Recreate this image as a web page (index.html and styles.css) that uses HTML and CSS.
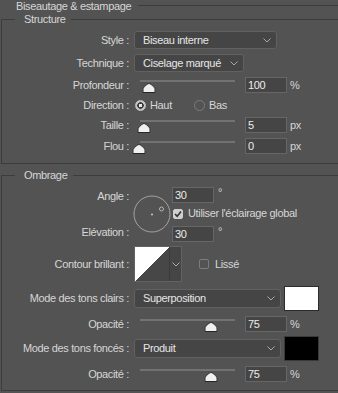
FILE: index.html
```html
<!DOCTYPE html>
<html lang="fr">
<head>
    <meta charset="UTF-8">
    <meta name="viewport" content="width=device-width, initial-scale=1.0">
    <title>Biseautage &amp; estampage</title>
    <link rel="stylesheet" href="styles.css">
</head>
<body>

  <div class="title-row">
    <span class="title">Biseautage &amp; estampage</span>
    <span class="rule"></span>
  </div>

  <!-- Structure -->
  <section class="group">
    <div class="group-head">
      <span class="corner"></span>
      <span class="group-name">Structure</span>
      <span class="rule"></span>
    </div>
    <div class="group-body structure">

      <div class="row">
        <span class="lbl">Style :</span>
        <div class="select w-style"><span>Biseau interne</span><svg class="chev" width="8" height="5" viewBox="0 0 8 5"><path d="M0.5 0.5 L4 4 L7.5 0.5"/></svg></div>
      </div>

      <div class="row">
        <span class="lbl">Technique :</span>
        <div class="select w-tech"><span>Ciselage marqué</span><svg class="chev" width="8" height="5" viewBox="0 0 8 5"><path d="M0.5 0.5 L4 4 L7.5 0.5"/></svg></div>
      </div>

      <div class="row slide-row">
        <span class="lbl">Profondeur :</span>
        <div class="slider"><span class="track"></span><svg class="thumb" style="left:10%" width="13" height="10" viewBox="0 0 13 10"><path d="M6.5 0.5 C8 0.5 12.5 4.5 12.5 6 V9.5 H0.5 V6 C0.5 4.5 5 0.5 6.5 0.5 Z"/></svg></div>
        <input class="num" type="text" value="100">
        <span class="unit">%</span>
      </div>

      <div class="row dir-row">
        <span class="lbl">Direction :</span>
        <div class="radios">
          <span class="radio-opt"><span class="radio on"></span>Haut</span>
          <span class="radio-opt"><span class="radio"></span>Bas</span>
        </div>
      </div>

      <div class="row slide-row">
        <span class="lbl">Taille :</span>
        <div class="slider"><span class="track"></span><svg class="thumb" style="left:5%" width="13" height="10" viewBox="0 0 13 10"><path d="M6.5 0.5 C8 0.5 12.5 4.5 12.5 6 V9.5 H0.5 V6 C0.5 4.5 5 0.5 6.5 0.5 Z"/></svg></div>
        <input class="num" type="text" value="5">
        <span class="unit">px</span>
      </div>

      <div class="row slide-row">
        <span class="lbl">Flou :</span>
        <div class="slider"><span class="track"></span><svg class="thumb" style="left:0%" width="13" height="10" viewBox="0 0 13 10"><path d="M6.5 0.5 C8 0.5 12.5 4.5 12.5 6 V9.5 H0.5 V6 C0.5 4.5 5 0.5 6.5 0.5 Z"/></svg></div>
        <input class="num" type="text" value="0">
        <span class="unit">px</span>
      </div>

    </div>
  </section>

  <!-- Ombrage -->
  <section class="group shade">
    <div class="group-head">
      <span class="corner"></span>
      <span class="group-name">Ombrage</span>
      <span class="rule"></span>
    </div>
    <div class="group-body ombrage">

      <div class="angle-block">
        <div class="angle-labels">
          <span class="lbl">Angle :</span>
          <span class="lbl">Elévation :</span>
        </div>
        <svg class="dial" width="38" height="38" viewBox="0 0 38 38">
          <circle cx="19" cy="19" r="18" fill="none" stroke="#a3a3a3"/>
          <circle cx="19" cy="19.5" r="1" fill="#c8c8c8"/>
          <circle cx="28.5" cy="14" r="2" fill="none" stroke="#b8b8b8"/>
        </svg>
        <div class="angle-fields">
          <div class="field"><input class="num" type="text" value="30"><span class="deg">°</span></div>
          <div class="check-row"><span class="check on"><svg width="10" height="10" viewBox="0 0 10 10"><path d="M2 5 L4.2 7.2 L8 2.6"/></svg></span>Utiliser l'éclairage global</div>
          <div class="field elev"><input class="num" type="text" value="30"><span class="deg">°</span></div>
        </div>
      </div>

      <div class="row">
        <span class="lbl">Contour brillant :</span>
        <div class="contour">
          <span class="curve"></span>
          <span class="contour-drop"><svg class="chev" width="8" height="5" viewBox="0 0 8 5"><path d="M0.5 0.5 L4 4 L7.5 0.5"/></svg></span>
        </div>
        <div class="check-row lisse"><span class="check"></span>Lissé</div>
      </div>

      <div class="row">
        <span class="lbl">Mode des tons clairs :</span>
        <div class="select w-mode"><span>Superposition</span><svg class="chev" width="8" height="5" viewBox="0 0 8 5"><path d="M0.5 0.5 L4 4 L7.5 0.5"/></svg></div>
        <span class="swatch white"></span>
      </div>

      <div class="row slide-row op">
        <span class="lbl">Opacité :</span>
        <div class="slider"><span class="track"></span><svg class="thumb" style="left:75%" width="13" height="10" viewBox="0 0 13 10"><path d="M6.5 0.5 C8 0.5 12.5 4.5 12.5 6 V9.5 H0.5 V6 C0.5 4.5 5 0.5 6.5 0.5 Z"/></svg></div>
        <input class="num" type="text" value="75">
        <span class="unit">%</span>
      </div>

      <div class="row">
        <span class="lbl">Mode des tons foncés :</span>
        <div class="select w-mode"><span>Produit</span><svg class="chev" width="8" height="5" viewBox="0 0 8 5"><path d="M0.5 0.5 L4 4 L7.5 0.5"/></svg></div>
        <span class="swatch black"></span>
      </div>

      <div class="row slide-row op">
        <span class="lbl">Opacité :</span>
        <div class="slider"><span class="track"></span><svg class="thumb" style="left:75%" width="13" height="10" viewBox="0 0 13 10"><path d="M6.5 0.5 C8 0.5 12.5 4.5 12.5 6 V9.5 H0.5 V6 C0.5 4.5 5 0.5 6.5 0.5 Z"/></svg></div>
        <input class="num" type="text" value="75">
        <span class="unit">%</span>
      </div>

    </div>
  </section>

</body>
</html>
```

FILE: styles.css
```css
*{
    margin: 0;
    padding: 0;
    box-sizing: border-box;
}
body{
    width: 338px;
    height: 393px;
    overflow: hidden;
    background-color: #535353;
    color: #d6d6d6;
    font-family: "Liberation Sans", Arial, sans-serif;
    font-size: 11px;
    line-height: 13px;
    letter-spacing: -0.35px;
}

/* headings + divider lines */
.title-row{
    display: flex;
    height: 13px;
    padding-left: 16px;
}
.rule{
    flex: 1;
    align-self: flex-start;
    margin-top: 5px;
    border-top: 1px solid #3c3c3c;
}
.title-row .rule{
    margin-left: 7px;
}
.group{
    margin-left: 1px;
}
.group-head{
    display: flex;
    height: 13px;
}
.group-head .corner{
    width: 14px;
    height: 7px;
    align-self: flex-end;
    border-top: 1px solid #3c3c3c;
    border-left: 1px solid #3c3c3c;
}
.group-head .group-name{
    margin-left: 9px;
}
.group-head .rule{
    margin-left: 6px;
    margin-top: 6px;
}
.group-body{
    display: flex;
    flex-direction: column;
    border-left: 1px solid #3c3c3c;
    border-bottom: 1px solid #3c3c3c;
}
.structure{
    gap: 5px;
    padding: 5px 0 9px;
}
.shade{
    margin-top: 5px;
}
.ombrage{
    gap: 4px;
    padding: 5px 0 8px;
}
.ombrage .op{
    margin-top: 1px;
}

/* rows */
.row{
    display: flex;
    align-items: center;
    gap: 5px;
}
.lbl{
    width: 127px;
    flex-shrink: 0;
    text-align: right;
}
.select{
    height: 18px;
    display: flex;
    align-items: center;
    justify-content: space-between;
    padding: 0 5px 0 8px;
    background-color: #454545;
    border: 1px solid #616161;
    border-radius: 3px;
    color: #e6e6e6;
}
.w-style{ width: 143px; }
.w-tech{ width: 110px; }
.w-mode{ width: 147px; height: 19px; }
.chev{
    fill: none;
    stroke: #a8a8a8;
    stroke-width: 1;
}

/* sliders */
.slide-row{
    height: 16px;
}
.slider{
    position: relative;
    width: 96px;
    height: 16px;
    margin-left: 5px;
}
.track{
    position: absolute;
    top: 3px;
    left: 1px;
    right: 0;
    height: 2px;
    background-color: #727272;
}
.thumb{
    position: absolute;
    top: 6px;
    transform: translateX(-50%);
}
.thumb path{
    fill: #f0f0f0;
    stroke: #262626;
    stroke-width: 1;
}
.num{
    width: 42px;
    height: 16px;
    margin-left: 5px;
    padding-left: 2px;
    background-color: #454545;
    border: 1px solid #666666;
    color: #ececec;
    font: inherit;
    letter-spacing: inherit;
    outline: none;
}
.unit{
    margin-left: -2px;
}

/* direction radios */
.dir-row{
    height: 14px;
}
.radios{
    display: flex;
    margin-left: 1px;
}
.radio-opt{
    display: flex;
    align-items: center;
    gap: 4px;
    width: 59px;
}
.radio{
    width: 11px;
    height: 11px;
    border-radius: 50%;
    border: 1px solid #7c7c7c;
}
.radio.on{
    border-color: #c4c4c4;
    background: radial-gradient(circle, #e6e6e6 0 1.5px, #3c3c3c 2px 3px, #c4c4c4 3.5px);
}

/* angle block */
.angle-block{
    display: flex;
    align-items: flex-start;
}
.angle-labels{
    height: 55px;
    padding: 3px 0;
    display: flex;
    flex-direction: column;
    justify-content: space-between;
}
.dial{
    margin: 8px 0 0 4px;
}
.angle-fields{
    margin-left: 1px;
    display: flex;
    flex-direction: column;
}
.angle-fields .num{
    margin-left: 0;
}
.field{
    display: flex;
    align-items: flex-start;
}
.deg{
    margin-left: 4px;
    line-height: 11px;
}
.field.elev{
    margin-top: 7px;
}
.check-row{
    display: flex;
    align-items: center;
    gap: 5px;
    margin-top: 5px;
    padding-left: 1px;
    height: 11px;
}
.check{
    width: 10px;
    height: 10px;
    border: 1px solid #7c7c7c;
    border-radius: 2px;
}
.check.on{
    border-color: #cfcfcf;
    background-color: #cfcfcf;
}
.check svg{
    display: block;
    margin: -1px;
    fill: none;
    stroke: #333333;
    stroke-width: 1.6;
}

/* contour */
.contour{
    display: flex;
    width: 48px;
    height: 36px;
    border: 1px solid #626262;
}
.curve{
    width: 35px;
    background: linear-gradient(to bottom right, #ffffff 50%, #474747 50%);
    border-right: 1px solid #3a3a3a;
}
.contour-drop{
    flex: 1;
    display: flex;
    align-items: center;
    justify-content: center;
    background-color: #454545;
}
.lisse{
    margin: 0 0 0 11px;
    gap: 6px;
}

/* swatches */
.swatch{
    width: 35px;
    height: 25px;
    margin-left: -2px;
}
.swatch.white{
    background-color: #ffffff;
    border: 1px solid #2c2c2c;
}
.swatch.black{
    background-color: #000000;
    border: 1px solid #3a3a3a;
}
```
